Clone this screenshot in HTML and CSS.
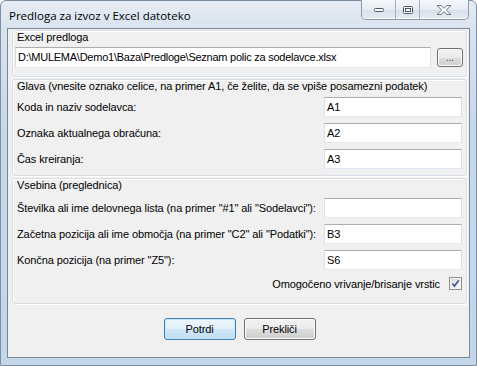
FILE: index.html
```html
<!DOCTYPE html>
<html>
<head>
<meta charset="utf-8">
<link rel="stylesheet" href="styles.css">
</head>
<body>
<div class="window">
  <div class="titlebar">
    <span class="title">Predloga za izvoz v Excel datoteko</span>
    <div class="caption">
      <div class="cbtn cmin">
        <svg width="12" height="6" viewBox="0 0 12 6"><rect x="1.5" y="1.5" width="9" height="3" rx="1" fill="#fff" stroke="#4a5563" stroke-width="1"/></svg>
      </div>
      <div class="cbtn cmax">
        <svg width="12" height="10" viewBox="0 0 12 10"><rect x="1.5" y="1.5" width="9" height="7" rx="1" fill="#fff" stroke="#4a5563" stroke-width="1"/><rect x="3.5" y="3.5" width="5" height="3" fill="none" stroke="#4a5563" stroke-width="1"/></svg>
      </div>
      <div class="cbtn cclose">
        <svg width="18" height="12" viewBox="0 0 18 12"><path d="M2 1.5 H6 L9 4.3 L12 1.5 H16 L11.3 6 L16 10.5 H12 L9 7.7 L6 10.5 H2 L6.7 6 Z" fill="#fff" stroke="#6b7683" stroke-width="1" stroke-linejoin="round"/></svg>
      </div>
    </div>
  </div>
  <div class="client">
    <div class="group g1">
      <div class="legend">Excel predloga</div>
      <div class="filerow">
        <div class="textbox wide">D:\MULEMA\Demo1\Baza\Predloge\Seznam polic za sodelavce.xlsx</div>
        <div class="browse">...</div>
      </div>
    </div>
    <div class="group g2">
      <div class="legend">Glava (vnesite oznako celice, na primer A1, če želite, da se vpiše posamezni podatek)</div>
      <div class="rows">
        <div class="row"><span class="label">Koda in naziv sodelavca:</span><div class="textbox">A1</div></div>
        <div class="row"><span class="label">Oznaka aktualnega obračuna:</span><div class="textbox">A2</div></div>
        <div class="row"><span class="label">Čas kreiranja:</span><div class="textbox">A3</div></div>
      </div>
    </div>
    <div class="group g3">
      <div class="legend">Vsebina (preglednica)</div>
      <div class="rows">
        <div class="row"><span class="label">Številka ali ime delovnega lista (na primer "#1" ali "Sodelavci"):</span><div class="textbox"></div></div>
        <div class="row"><span class="label">Začetna pozicija ali ime območja (na primer "C2" ali "Podatki"):</span><div class="textbox">B3</div></div>
        <div class="row"><span class="label">Končna pozicija (na primer "Z5"):</span><div class="textbox">S6</div></div>
      </div>
      <div class="checkrow">
        <span class="label">Omogočeno vrivanje/brisanje vrstic</span>
        <span class="checkbox"><svg width="11" height="11" viewBox="0 0 11 11"><path d="M2.5 5.5 L4.5 8 L8.8 2.2" fill="none" stroke="#4a5d96" stroke-width="1.8"/></svg></span>
      </div>
    </div>
    <div class="buttons">
      <div class="btn default">Potrdi</div>
      <div class="btn">Prekliči</div>
    </div>
  </div>
</div>
</body>
</html>
```

FILE: styles.css
```css
html, body {
  margin: 0;
  padding: 0;
  background: #ffffff;
}
.window {
  width: 477px;
  height: 366px;
  box-sizing: border-box;
  border: 1px solid #7d8fa3;
  border-radius: 6px 6px 0 0;
  background: linear-gradient(to bottom, #e6ecf3 0px, #d9e3ee 28px, #c8d9eb 120px, #c3d6ea 366px);
  display: flex;
  flex-direction: column;
  font-family: "Liberation Sans", Arial, sans-serif;
  font-size: 11px;
  letter-spacing: -0.1px;
  color: #000;
}
.titlebar {
  height: 27px;
  display: flex;
  align-items: flex-start;
}
.title {
  font-family: "Open Sans", "Noto Sans", sans-serif;
  font-size: 11.5px;
  letter-spacing: 0;
  padding: 7px 0 0 8px;
  color: #000;
}
.caption {
  margin-left: auto;
  margin-right: 7px;
  margin-top: -1px;
  height: 19px;
  display: flex;
  border: 1px solid #8c99a8;
  border-top: none;
  border-radius: 0 0 5px 5px;
  overflow: hidden;
  background: linear-gradient(to bottom, #f5f8fb 0%, #e6ecf2 50%, #d9e2eb 51%, #e3eaf1 100%);
  box-shadow: inset 0 -1px 0 #ffffff;
}
.cbtn {
  height: 19px;
  display: flex;
  align-items: center;
  justify-content: center;
}
.cmin { width: 33px; border-right: 1px solid #a2afbd; }
.cmax { width: 23px; border-right: 1px solid #a2afbd; }
.cclose { width: 48px; }
.client {
  margin: 0 6px 7px 6px;
  flex: 1;
  border: 1px solid #7a8797;
  background: #f0f0f0;
  padding: 1px 2px 0 4px;
  display: flex;
  flex-direction: column;
}
.group {
  border: 1px solid #d5dfe5;
  border-radius: 3px;
  box-shadow: 1px 1px 0 #ffffff, inset 1px 1px 0 #ffffff;
}
.legend {
  padding-left: 4px;
  line-height: 13px;
  white-space: nowrap;
}
.g1 { padding-bottom: 8px; }
.g2 { margin-top: 2px; padding-bottom: 6px; }
.g3 { margin-top: 2px; padding-bottom: 13px; }
.filerow {
  margin-top: 3px;
  padding-left: 2px;
  display: flex;
  align-items: center;
  gap: 6px;
}
.textbox {
  box-sizing: border-box;
  height: 20px;
  width: 138px;
  background: #fff;
  border: 1px solid #dbdfe6;
  border-top-color: #abadb3;
  border-bottom-color: #e3e9ef;
  padding: 0 0 0 2px;
  line-height: 18px;
  white-space: nowrap;
  overflow: hidden;
}
.textbox.wide {
  width: 416px;
  height: 21px;
  line-height: 19px;
  letter-spacing: -0.25px;
}
.browse {
  box-sizing: border-box;
  width: 26px;
  height: 19px;
  border: 1px solid #707070;
  border-radius: 3px;
  background: linear-gradient(to bottom, #f2f2f2 0%, #ebebeb 50%, #dddddd 51%, #cfcfcf 100%);
  box-shadow: inset 0 0 0 1px #fcfcfc;
  text-align: center;
  font-size: 10px;
  line-height: 17px;
  color: #444;
}
.g2 .rows { margin-top: 4px; }
.g3 .rows { margin-top: 6px; }
.rows {
  display: flex;
  flex-direction: column;
  gap: 6px;
  padding: 0 4px 0 4px;
}
.row {
  display: flex;
  align-items: center;
  justify-content: space-between;
}
.label {
  white-space: nowrap;
}
.checkrow {
  margin-top: 7px;
  padding-right: 4px;
  display: flex;
  justify-content: flex-end;
  align-items: center;
  gap: 9px;
  height: 13px;
}
.checkbox {
  box-sizing: border-box;
  width: 13px;
  height: 13px;
  border: 1px solid #8e8f8f;
  background: linear-gradient(135deg, #d7d8d9 0%, #f0f0f0 60%, #fbfbfb 100%);
  box-shadow: inset 0 0 0 1px #f4f4f4;
  display: flex;
  align-items: center;
  justify-content: center;
}
.buttons {
  margin-top: 14px;
  display: flex;
  justify-content: center;
  gap: 8px;
}
.btn {
  box-sizing: border-box;
  width: 72px;
  height: 22px;
  border: 1px solid #707070;
  border-radius: 3px;
  background: linear-gradient(to bottom, #f2f2f2 0%, #ebebeb 50%, #dddddd 51%, #cfcfcf 100%);
  box-shadow: inset 0 0 0 1px #fcfcfc;
  text-align: center;
  line-height: 20px;
}
.btn.default {
  border-color: #3c7fb1;
  background: linear-gradient(to bottom, #edf6fc 0%, #e1f0fa 50%, #cfe7f7 51%, #c0def3 100%);
  box-shadow: inset 0 0 0 1px #c8e6f7;
}
```
